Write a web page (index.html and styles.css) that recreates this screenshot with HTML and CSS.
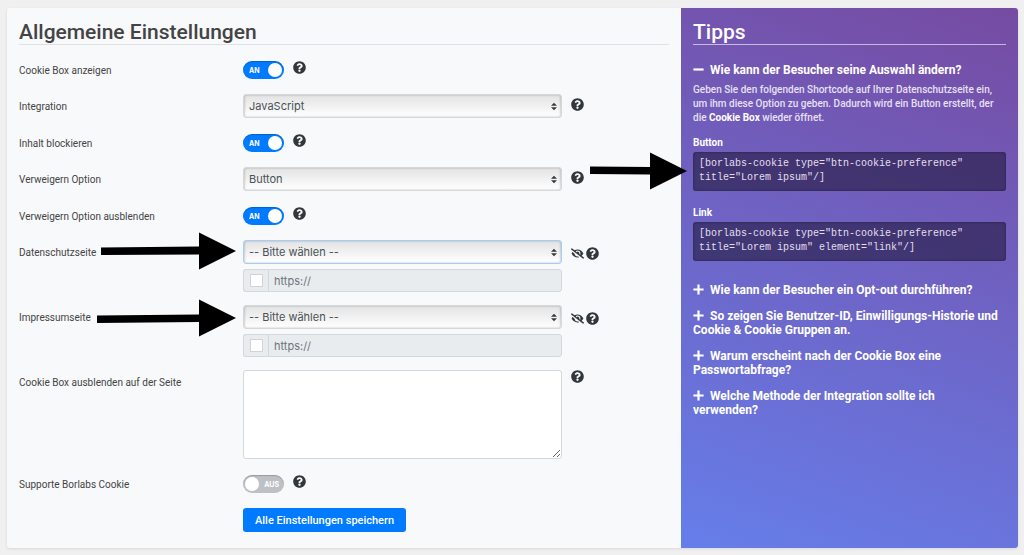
FILE: index.html
```html
<!DOCTYPE html>
<html lang="de">
  <head>
    <meta charset="UTF-8" />
    <meta name="viewport" content="width=device-width, initial-scale=1.0" />
    <title>Allgemeine Einstellungen</title>
    <link rel="stylesheet" href="styles.css">
  </head>
  <body>
    <svg class="sprite" aria-hidden="true">
      <symbol id="help" viewBox="0 0 512 512">
        <path d="M504 256c0 136.997-111.043 248-248 248S8 392.997 8 256C8 119.083 119.043 8 256 8s248 111.083 248 248zM262.655 90c-54.497 0-89.255 22.957-116.549 63.758-3.536 5.286-2.353 12.415 2.715 16.258l34.699 26.31c5.205 3.947 12.621 3.008 16.665-2.122 17.864-22.658 30.113-35.797 57.303-35.797 20.429 0 45.698 13.148 45.698 32.958 0 14.976-12.363 22.667-32.534 33.976C247.128 238.528 216 254.941 216 296v4c0 6.627 5.373 12 12 12h56c6.627 0 12-5.373 12-12v-1.333c0-28.462 83.186-29.647 83.186-106.667 0-58.002-60.165-102-116.531-102zM256 338c-25.365 0-46 20.635-46 46 0 25.364 20.635 46 46 46s46-20.636 46-46c0-25.364-20.635-46-46-46z"/>
      </symbol>
      <symbol id="eye-slash" viewBox="0 0 640 512">
        <path d="M320 400c-75.85 0-137.25-58.71-142.9-133.11L72.2 185.82c-13.79 17.3-26.48 35.59-36.72 55.59a32.35 32.35 0 0 0 0 29.19C89.71 376.41 197.07 448 320 448c26.91 0 52.87-4 77.89-10.46L346 397.39a144.13 144.13 0 0 1-26 2.61zm313.82 58.1l-110.55-85.44a331.25 331.25 0 0 0 81.25-102.07 32.35 32.35 0 0 0 0-29.19C550.29 135.59 442.93 64 320 64a308.15 308.15 0 0 0-147.32 37.7L45.46 3.37A16 16 0 0 0 23 6.18L3.37 31.45A16 16 0 0 0 6.18 53.9l588.36 454.73a16 16 0 0 0 22.46-2.81l19.64-25.27a16 16 0 0 0-2.82-22.45zm-183.72-142l-39.3-30.38A94.75 94.75 0 0 0 416 256a94.76 94.76 0 0 0-121.31-92.21A47.65 47.65 0 0 1 304 192a46.64 46.64 0 0 1-1.54 10l-73.61-56.89A142.31 142.31 0 0 1 320 112a143.92 143.92 0 0 1 144 144c0 21.63-5.29 41.79-13.9 60.11z"/>
      </symbol>
      <symbol id="plus" viewBox="0 0 11 11">
        <path d="M4.4 0.5h2.2v3.9h4v2.2h-4v3.9H4.4V6.600h-4V4.400h4z"/>
      </symbol>
      <symbol id="minus" viewBox="0 0 11 11">
        <path d="M0.400 4.400h10.200v2.200H0.400z"/>
      </symbol>
    </svg>

    <div class="card">
      <form class="settings">
        <h2>Allgemeine Einstellungen</h2>

        <div class="row">
          <label class="name" for="showBox">Cookie Box anzeigen</label>
          <label class="switch"><input type="checkbox" id="showBox" checked><span>AN</span></label>
          <div class="icons"><svg class="help"><use href="#help"/></svg></div>
        </div>

        <div class="row">
          <label class="name" for="integration">Integration</label>
          <div class="control">
            <select id="integration"><option>JavaScript</option></select>
          </div>
          <div class="icons"><svg class="help"><use href="#help"/></svg></div>
        </div>

        <div class="row">
          <label class="name" for="blockContent">Inhalt blockieren</label>
          <label class="switch"><input type="checkbox" id="blockContent" checked><span>AN</span></label>
          <div class="icons"><svg class="help"><use href="#help"/></svg></div>
        </div>

        <div class="row">
          <label class="name" for="refuse">Verweigern Option</label>
          <div class="control">
            <select id="refuse"><option>Button</option></select>
          </div>
          <div class="icons"><svg class="help"><use href="#help"/></svg></div>
        </div>

        <div class="row">
          <label class="name" for="hideRefuse">Verweigern Option ausblenden</label>
          <label class="switch"><input type="checkbox" id="hideRefuse" checked><span>AN</span></label>
          <div class="icons"><svg class="help"><use href="#help"/></svg></div>
        </div>

        <div class="row">
          <label class="name" for="privacyPage">Datenschutzseite
            <svg class="arrow arrow-privacy" viewBox="0 0 135 38"><path d="M0 15.500L98 14.500V0.500L135 19L98 37.500V22.500L0 23z"/></svg>
          </label>
          <div class="control">
            <select id="privacyPage" class="active"><option>-- Bitte wählen --</option></select>
            <div class="url">
              <div class="check"><input type="checkbox" aria-label="Eigene URL Datenschutz"></div>
              <input type="text" placeholder="https://" aria-label="URL Datenschutz" disabled>
            </div>
          </div>
          <div class="icons low"><svg class="eye"><use href="#eye-slash"/></svg><svg class="help"><use href="#help"/></svg></div>
        </div>

        <div class="row">
          <label class="name" for="imprintPage">Impressumseite
            <svg class="arrow arrow-imprint" viewBox="0 0 139 38"><path d="M0 16.500L102 15.500V0.500L139 19L102 37.500V23L0 24z"/></svg>
          </label>
          <div class="control">
            <select id="imprintPage"><option>-- Bitte wählen --</option></select>
            <div class="url">
              <div class="check"><input type="checkbox" aria-label="Eigene URL Impressum"></div>
              <input type="text" placeholder="https://" aria-label="URL Impressum" disabled>
            </div>
          </div>
          <div class="icons low"><svg class="eye"><use href="#eye-slash"/></svg><svg class="help"><use href="#help"/></svg></div>
        </div>

        <div class="row">
          <label class="name" for="hideOn">Cookie Box ausblenden auf der Seite</label>
          <div class="control"><textarea id="hideOn"></textarea></div>
          <div class="icons high"><svg class="help"><use href="#help"/></svg></div>
        </div>

        <div class="row">
          <label class="name" for="support">Supporte Borlabs Cookie</label>
          <label class="switch"><input type="checkbox" id="support"><span>AUS</span></label>
          <div class="icons"><svg class="help"><use href="#help"/></svg></div>
        </div>

        <div class="row">
          <div class="name"></div>
          <button type="button" class="btn-save">Alle Einstellungen speichern</button>
        </div>
      </form>

      <aside class="tips">
        <h2>Tipps</h2>

        <h3><a href="#"><svg><use href="#minus"/></svg>Wie kann der Besucher seine Auswahl ändern?</a></h3>
        <div class="answer">
          <p>Geben Sie den folgenden Shortcode auf Ihrer Datenschutzseite ein, um ihm diese Option zu geben. Dadurch wird ein Button erstellt, der die <strong>Cookie Box</strong> wieder öffnet.</p>
          <h4>Button</h4>
          <div class="code">
            <code>[borlabs-cookie type="btn-cookie-preference" title="Lorem ipsum"/]</code>
            <svg class="arrow arrow-code" viewBox="0 0 97 38"><path d="M0 14.500L60 15V0.500L97 19L60 37.500V22.500L0 22z"/></svg>
          </div>
          <h4>Link</h4>
          <div class="code">
            <code>[borlabs-cookie type="btn-cookie-preference" title="Lorem ipsum" element="link"/]</code>
          </div>
        </div>

        <h3><a href="#"><svg><use href="#plus"/></svg>Wie kann der Besucher ein Opt-out durchführen?</a></h3>
        <h3><a href="#"><svg><use href="#plus"/></svg>So zeigen Sie Benutzer-ID, Einwilligungs-Historie und Cookie &amp; Cookie Gruppen an.</a></h3>
        <h3><a href="#"><svg><use href="#plus"/></svg>Warum erscheint nach der Cookie Box eine Passwortabfrage?</a></h3>
        <h3><a href="#"><svg><use href="#plus"/></svg>Welche Methode der Integration sollte ich<br>verwenden?</a></h3>
      </aside>
    </div>
  </body>
</html>
```

FILE: styles.css
```css
* {
  box-sizing: border-box;
}
body {
  margin: 0;
  padding: 8px 6px 7px 7px;
  background: #f0f0f0;
  color: #444;
  font-family: Roboto, "Liberation Sans", sans-serif;
  font-size: 10px;
  line-height: 14px;
}
.sprite {
  display: none;
}
.card {
  display: grid;
  grid-template-columns: 2fr 1fr;
  border-radius: 3px;
  background: #f8f9fb;
  box-shadow: 0 1px 3px rgba(0, 0, 0, 0.1);
}
.settings, .tips {
  padding: 12px;
}
h2 {
  margin: 0 0 13px;
  height: 25px;
  border-bottom: 1px solid #dee2e6;
  font-size: 21px;
  font-weight: 500;
  line-height: 25px;
}

/* form rows */
.row {
  display: flex;
  margin-bottom: 13px;
}
.row:last-child {
  margin-bottom: 4px;
}
.name {
  position: relative;
  flex: 0 0 224px;
  padding-top: 6px;
}
.control {
  flex: 0 1 319px;
}
select, textarea, input[type="text"] {
  display: block;
  width: 100%;
  border: 1px solid #d3d8dd;
  border-radius: 3px;
  color: #495057;
  font-family: Inter, sans-serif;
  font-size: 11px;
}
select {
  height: 24px;
  padding: 0 5px;
  appearance: none;
  background: url("data:image/svg+xml,%3Csvg xmlns='http://www.w3.org/2000/svg' viewBox='0 0 4 5'%3E%3Cpath fill='%23343a40' d='M2 0L0 2h4zm0 5L0 3h4z'/%3E%3C/svg%3E") no-repeat right 4px center / 6px 9px, linear-gradient(#e3e3e3, #fff);
  box-shadow: inset 1px 0 2px rgba(0, 0, 0, 0.15), inset -1px 0 2px rgba(0, 0, 0, 0.15);
}
select.active {
  border-color: #a3cdfb;
}
textarea {
  height: 89px;
  background: #fff;
  resize: vertical;
}
.url {
  display: flex;
  height: 23px;
  margin-top: 5px;
}
.check {
  display: flex;
  align-items: center;
  justify-content: center;
  width: 25px;
  border: 1px solid #d3d8dd;
  border-right: 0;
  border-radius: 3px 0 0 3px;
  background: #e9ecef;
}
.check input {
  width: 13px;
  height: 13px;
  margin: 0;
  appearance: none;
  border: 1px solid #ced4da;
  background: #fff;
}
.url input[type="text"] {
  flex: 1;
  padding: 0 5px;
  border-radius: 0 3px 3px 0;
  background: #e9ecef;
}
.url input::placeholder {
  color: #6c757d;
}

/* toggles */
.switch {
  position: relative;
  display: block;
  width: 41px;
  height: 23px;
  padding-top: 3px;
}
.switch input {
  display: block;
  width: 41px;
  height: 18px;
  margin: 0;
  appearance: none;
  border-radius: 9px;
  background: #bdc1c6;
  box-shadow: inset 0 1px 1px rgba(0, 0, 0, 0.2);
}
.switch input::before {
  content: "";
  display: block;
  width: 14px;
  height: 14px;
  margin: 2px;
  float: left;
  border-radius: 50%;
  background: #fff;
}
.switch input:checked {
  background: #007bff;
}
.switch input:checked::before {
  float: right;
}
.switch span {
  position: absolute;
  top: 6px;
  right: 5px;
  color: #fff;
  font-family: Inter, sans-serif;
  font-size: 7px;
  font-weight: 700;
  line-height: 14px;
}
.switch input:checked + span {
  right: auto;
  left: 6px;
}

.icons {
  display: flex;
  height: 14px;
  margin: 4px 0 0 9px;
  fill: #32373c;
}
.switch + .icons {
  margin-top: 3px;
}
.icons.low {
  margin-top: 7px;
}
.icons.high {
  margin-top: 0;
}
.help {
  width: 13px;
  height: 13px;
}
.eye {
  width: 13px;
  height: 13px;
  margin-right: 2px;
}
.btn-save {
  height: 24px;
  padding: 0 12px;
  border: 0;
  border-radius: 3px;
  background: #007bff;
  color: #fff;
  font-family: inherit;
  font-size: 11px;
  font-weight: 500;
}

/* pointers */
.arrow {
  position: absolute;
  z-index: 1;
  height: 38px;
  fill: #000;
}
.arrow-privacy {
  top: -8px;
  right: 7px;
  width: 135px;
}
.arrow-imprint {
  top: -6px;
  right: 7px;
  width: 139px;
}
.arrow-code {
  top: 0;
  right: 100%;
  width: 97px;
  margin-right: 6px;
}

/* sidebar */
.tips {
  border-radius: 0 3px 3px 0;
  background: linear-gradient(200deg, #764ba2 0%, #667eea 100%);
  color: #fff;
}
.tips h2 {
  margin-bottom: 18px;
  border-color: rgba(255, 255, 255, 0.6);
}
.tips h3 {
  margin: 0 0 12px;
  font-size: 12px;
  font-weight: 700;
  line-height: 14px;
}
.tips h3 a {
  color: #fff;
  text-decoration: none;
}
.tips h3 svg {
  width: 11px;
  height: 11px;
  margin-right: 6px;
  vertical-align: -1px;
  fill: #fff;
}
.answer {
  margin: -6px 0 22px;
}
.answer p {
  margin: 0 0 11px;
  font-size: 10px;
  font-weight: 500;
  color: #e6e0f4;
}
.answer strong {
  font-weight: 700;
  color: #fff;
}
.answer h4 {
  margin: 0 0 2px;
  font-size: 10px;
  font-weight: 700;
}
.code {
  position: relative;
  margin-bottom: 15px;
  padding: 5px 6px 6px;
  border-radius: 3px;
  background: rgba(33, 25, 61, 0.6);
  box-shadow: inset 0 0 3px rgba(0, 0, 0, 0.4);
}
.code code {
  display: block;
  color: #e4dff0;
  font-family: "Liberation Mono", monospace;
  font-size: 10px;
  line-height: 14px;
}
```
